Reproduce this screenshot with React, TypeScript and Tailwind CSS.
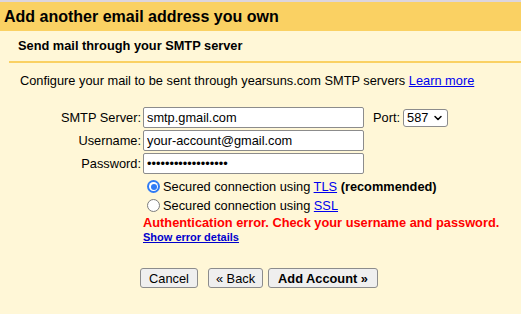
import { ChevronDown } from "lucide-react"

const linkCls = "text-[#0000ee] underline"

function Radio({ checked }: { checked?: boolean }) {
  if (checked) {
    return (
      <span className="w-[13px] h-[13px] rounded-full bg-[#2f7bf5] flex items-center justify-center shrink-0">
        <span className="w-[9px] h-[9px] rounded-full bg-white flex items-center justify-center">
          <span className="w-[6px] h-[6px] rounded-full bg-[#2f7bf5]" />
        </span>
      </span>
    )
  }
  return <span className="w-[13px] h-[13px] rounded-full bg-white border border-[#7d7d7d] shrink-0" />
}

function Field({ label, value }: { label: string; value: string }) {
  return (
    <div className="flex items-center h-[21px]">
      <label className="w-[141px] text-right">{label}</label>
      <input
        readOnly
        defaultValue={value}
        className="ml-[2px] w-[221px] h-[21px] border border-[#8c8c8c] rounded-[2px] bg-white px-[3px] text-[12.8px] outline-none"
      />
    </div>
  )
}

export default function App() {
  return (
    <div className="w-[521px] h-[314px] overflow-hidden bg-[#fff7d7] text-black text-[12.8px] font-['Liberation_Sans',Arial,sans-serif]">
      <div className="h-[2px] bg-[#dcd5de]" />
      <div className="h-[29px] bg-[#fad163] pl-[4px] flex items-center text-[16px] font-bold">
        Add another email address you own
      </div>
      <div className="ml-[9px] h-[32px] border-b-2 border-[#fad163] pl-[9px] flex items-center font-bold">
        Send mail through your SMTP server
      </div>

      <p className="mt-[10px] pl-[20px] leading-[15px]">
        Configure your mail to be sent through yearsuns.com SMTP servers{" "}
        <a href="#" className={linkCls}>Learn more</a>
      </p>

      <div className="mt-[19px] flex flex-col gap-[2px]">
        <div className="flex items-center">
          <Field label="SMTP Server:" value="smtp.gmail.com" />
          <span className="ml-[9px]">Port:</span>
          <div className="ml-[3px] w-[45px] h-[18px] border border-[#8c8c8c] rounded-[3px] bg-white flex items-center justify-between pl-[3px] pr-[3px]">
            <span>587</span>
            <ChevronDown className="w-[12px] h-[12px]" strokeWidth={3} />
          </div>
        </div>
        <Field label="Username:" value="your-account@gmail.com" />
        <Field label="Password:" value="••••••••••••••••••" />
      </div>

      <div className="mt-[3px] pl-[147px] flex flex-col">
        <div className="h-[19px] flex items-center gap-[3px]">
          <Radio checked />
          <span>
            Secured connection using <a href="#" className={linkCls}>TLS</a>{" "}
            <b>(recommended)</b>
          </span>
        </div>
        <div className="h-[19px] flex items-center gap-[3px]">
          <Radio />
          <span>
            Secured connection using <a href="#" className={linkCls}>SSL</a>
          </span>
        </div>
      </div>

      <div className="pl-[143px]">
        <div className="leading-[16px] font-bold text-[#ff0000]">
          Authentication error. Check your username and password.
        </div>
        <a href="#" className="block leading-[12px] text-[11px] font-bold text-[#0000cc] underline">
          Show error details
        </a>
      </div>

      <div className="mt-[25px] pl-[140px] flex items-center">
        <button className="w-[58px] h-[20px] bg-[#efefef] border border-[#8c8c8c] rounded-[3px]">Cancel</button>
        <button className="ml-[10px] w-[55px] h-[20px] bg-[#efefef] border border-[#8c8c8c] rounded-[3px]">« Back</button>
        <button className="ml-[5px] w-[110px] h-[20px] bg-[#efefef] border border-[#8c8c8c] rounded-[3px] font-bold">
          Add Account »
        </button>
      </div>
    </div>
  )
}
